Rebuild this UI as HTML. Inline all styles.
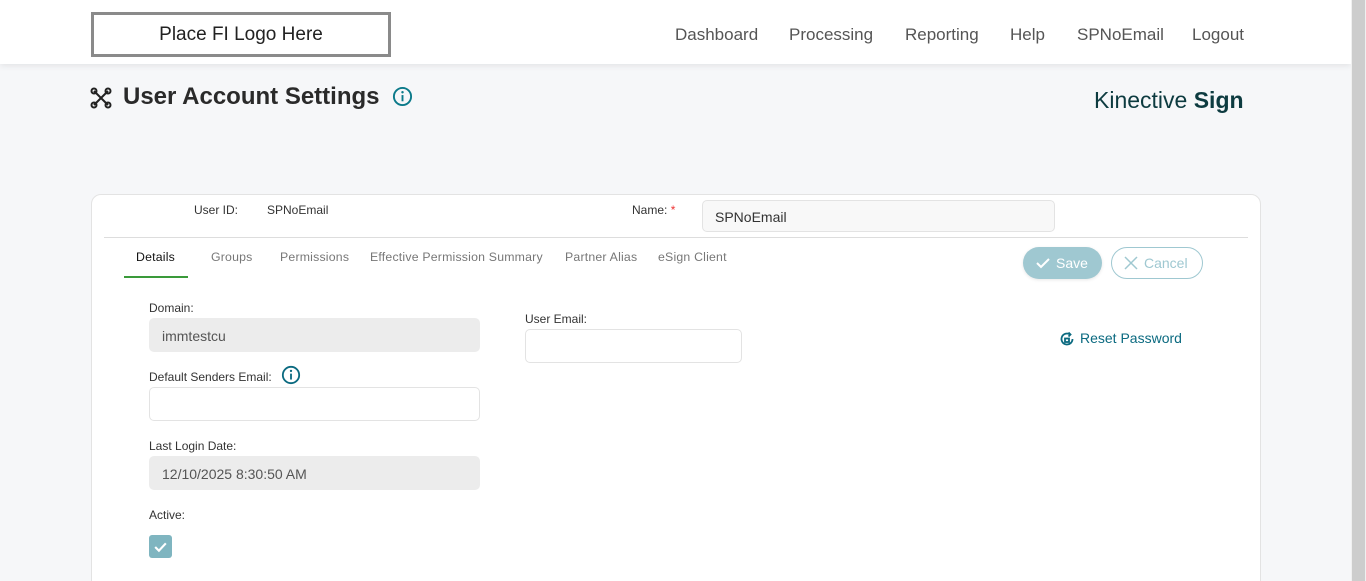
<!DOCTYPE html>
<html><head><meta charset="utf-8"><style>
*{box-sizing:border-box;margin:0;padding:0}
html,body{width:1366px;height:581px;overflow:hidden}
body{background:#f6f7f9;font-family:"Liberation Sans",sans-serif;position:relative;color:#222}
.hdr{position:absolute;left:0;top:0;width:1351px;height:64px;background:#fff;box-shadow:0 2px 6px rgba(0,0,0,.08)}
.logo{position:absolute;left:91px;top:12px;width:300px;height:45px;border:3px solid #8a8a8a;font-size:19px;text-align:center;line-height:39px;color:#222}
.nav{position:absolute;top:25px;font-size:17px;color:#555}
.sb{position:absolute;left:1351px;top:0;width:15px;height:581px;background:#f0f0f0}
.sb div{position:absolute;left:1px;top:0;width:13px;height:581px;background:#cdcdcd}
h1{position:absolute;left:123px;top:83px;font-size:24px;font-weight:bold;color:#2a2a2a}
.kin{position:absolute;left:1094px;top:87px;font-size:23px;color:#0d3b40}
.kin b{font-weight:700}
.card{position:absolute;left:91px;top:194px;width:1170px;height:400px;background:#fff;border:1px solid #e3e3e3;border-radius:10px}
.t{position:absolute;font-size:12px;color:#333}
.tab{position:absolute;top:250px;font-size:12.3px;color:#777;letter-spacing:.2px}
.inp{position:absolute;border:1px solid #e3e3e3;border-radius:5px;background:#fff;font-size:14px;color:#333;padding-left:12px}
.gray{background:#ececec;border-color:#ececec;color:#555}
.lbl{position:absolute;font-size:12px;color:#333}
</style></head><body>
<div class="hdr">
<div class="logo">Place FI Logo Here</div>
<span class="nav" style="left:675px">Dashboard</span>
<span class="nav" style="left:789px">Processing</span>
<span class="nav" style="left:905px">Reporting</span>
<span class="nav" style="left:1010px">Help</span>
<span class="nav" style="left:1077px">SPNoEmail</span>
<span class="nav" style="left:1192px">Logout</span>
</div>
<div class="sb"><div></div></div>
<svg style="position:absolute;left:90px;top:87px" width="22" height="22" viewBox="0 0 22 22" fill="none" stroke="#222" stroke-width="2"><path d="M4 4l14 14M18 4L4 18"/><circle cx="4" cy="4" r="2.5"/><circle cx="18" cy="18" r="2.5"/><circle cx="18" cy="4" r="2.5"/><circle cx="4" cy="18" r="2.5"/></svg>
<h1>User Account Settings</h1>
<svg style="position:absolute;left:392px;top:86px" width="21" height="21" viewBox="0 0 22 22"><circle cx="11" cy="11" r="9" fill="none" stroke="#0b7a8a" stroke-width="2"/><rect x="10" y="9.5" width="2" height="6.5" fill="#0b7a8a"/><circle cx="11" cy="6.5" r="1.3" fill="#0b7a8a"/></svg>
<div class="kin">Kinective <b>Sign</b></div>
<div class="card"></div>
<span class="t" style="left:194px;top:203px">User ID:</span>
<span class="t" style="left:267px;top:203px">SPNoEmail</span>
<span class="t" style="left:632px;top:203px">Name: <span style="color:#e33">*</span></span>
<div class="inp" style="left:702px;top:200px;width:353px;height:32px;line-height:32px;background:#f8f8f8">SPNoEmail</div>
<div style="position:absolute;left:104px;top:237px;width:1144px;height:1px;background:#ddd"></div>
<span class="tab" style="left:136px;color:#111">Details</span>
<div style="position:absolute;left:124px;top:276px;width:64px;height:2px;background:#3a9a3a"></div>
<span class="tab" style="left:211px">Groups</span>
<span class="tab" style="left:280px">Permissions</span>
<span class="tab" style="left:370px">Effective Permission Summary</span>
<span class="tab" style="left:565px">Partner Alias</span>
<span class="tab" style="left:658px">eSign Client</span>
<div style="position:absolute;left:1023px;top:247px;width:79px;height:32px;border-radius:16px;background:#9fc8d1;color:#fff;font-size:14px;line-height:32px;padding-left:33px;box-shadow:0 1px 3px rgba(0,0,0,.1)">Save</div>
<svg style="position:absolute;left:1035px;top:255px" width="16" height="16" viewBox="0 0 16 16"><path d="M2 8l4 4 8-8" stroke="#fff" stroke-width="2" fill="none"/></svg>
<div style="position:absolute;left:1111px;top:247px;width:92px;height:32px;border-radius:16px;border:1px solid #9fc8d1;color:#9fc8d1;font-size:14px;line-height:30px;padding-left:32px">Cancel</div>
<svg style="position:absolute;left:1124px;top:256px" width="14" height="14" viewBox="0 0 14 14"><path d="M1 1l12 12M13 1L1 13" stroke="#9fc8d1" stroke-width="1.5"/></svg>
<span class="lbl" style="left:149px;top:301px">Domain:</span>
<div class="inp gray" style="left:149px;top:318px;width:331px;height:34px;line-height:34px">immtestcu</div>
<span class="lbl" style="left:149px;top:370px">Default Senders Email:</span>
<svg style="position:absolute;left:281px;top:365px" width="20" height="20" viewBox="0 0 22 22"><circle cx="11" cy="11" r="9" fill="none" stroke="#0b6a80" stroke-width="2"/><rect x="10" y="9.5" width="2" height="6.5" fill="#0b6a80"/><circle cx="11" cy="6.5" r="1.3" fill="#0b6a80"/></svg>
<div class="inp" style="left:149px;top:387px;width:331px;height:34px"></div>
<span class="lbl" style="left:149px;top:439px">Last Login Date:</span>
<div class="inp gray" style="left:149px;top:456px;width:331px;height:34px;line-height:34px">12/10/2025 8:30:50 AM</div>
<span class="lbl" style="left:149px;top:508px">Active:</span>
<div style="position:absolute;left:149px;top:535px;width:23px;height:23px;border-radius:3px;background:#7fb5c0"></div>
<svg style="position:absolute;left:152px;top:538px" width="17" height="17" viewBox="0 0 16 16"><path d="M3 8.5l3.5 3.5L13 5" stroke="#fff" stroke-width="2" fill="none"/></svg>
<span class="lbl" style="left:525px;top:312px">User Email:</span>
<div class="inp" style="left:525px;top:329px;width:217px;height:34px"></div>
<svg style="position:absolute;left:1059px;top:331px" width="16" height="16" viewBox="0 0 16 16" fill="none" stroke="#0b6a80" stroke-width="1.8"><path d="M13.5 8A5.5 5.5 0 1 1 11 3.4"/><path d="M9.5 1.5l2 2-2 2"/><rect x="6" y="7.5" width="4" height="3.5"/></svg>
<span style="position:absolute;left:1080px;top:330px;font-size:14px;color:#0b6a80">Reset Password</span>
</body></html>
